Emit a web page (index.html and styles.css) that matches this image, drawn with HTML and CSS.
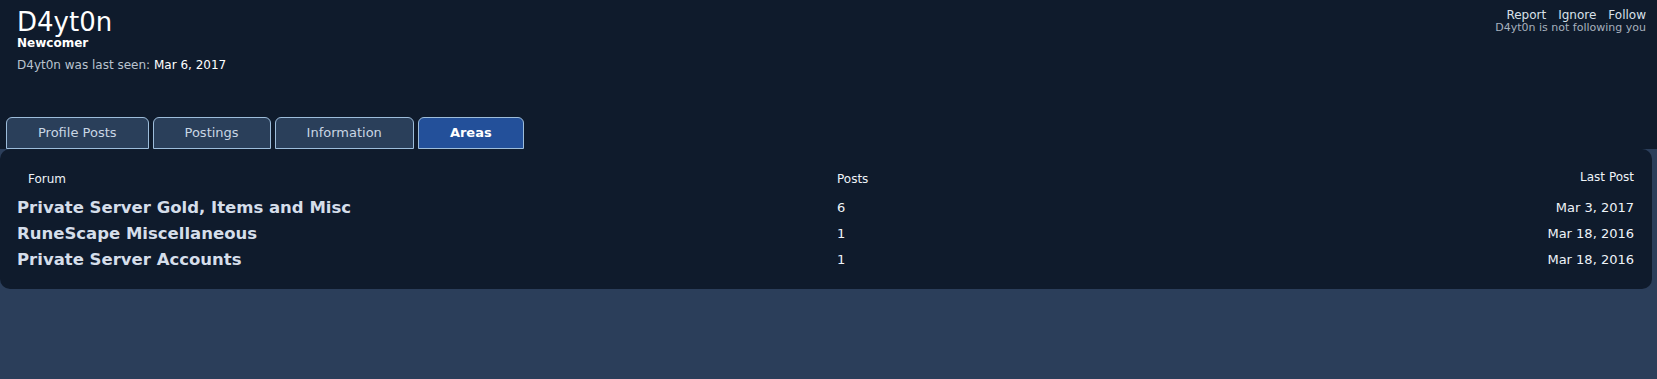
FILE: index.html
```html
<!DOCTYPE html>
<html lang="en">
<head>
<meta charset="utf-8">
<title>D4yt0n</title>
<link rel="stylesheet" href="styles.css">
</head>
<body>
<header class="profile-header">
  <div class="header-top">
    <div class="identity">
      <h1 class="username">D4yt0n</h1>
      <div class="rank">Newcomer</div>
      <div class="last-seen">D4yt0n was last seen: <span class="last-seen-date">Mar 6, 2017</span></div>
    </div>
    <div class="actions">
      <div class="action-links">
        <a class="action" href="#">Report</a>
        <a class="action" href="#">Ignore</a>
        <a class="action" href="#">Follow</a>
      </div>
      <div class="follow-status">D4yt0n is not following you</div>
    </div>
  </div>
  <nav class="tabs">
    <a class="tab" href="#">Profile Posts</a>
    <a class="tab" href="#">Postings</a>
    <a class="tab" href="#">Information</a>
    <a class="tab tab-active" href="#">Areas</a>
  </nav>
</header>
<section class="panel">
  <div class="areas-table">
    <div class="row head">
      <div class="cell forum head-forum">Forum</div>
      <div class="cell posts">Posts</div>
      <div class="cell last head-last">Last Post</div>
    </div>
    <div class="body-rows">
      <div class="row">
        <div class="cell forum"><a class="forum-link" href="#">Private Server Gold, Items and Misc</a></div>
        <div class="cell posts">6</div>
        <div class="cell last">Mar 3, 2017</div>
      </div>
      <div class="row">
        <div class="cell forum"><a class="forum-link" href="#">RuneScape Miscellaneous</a></div>
        <div class="cell posts">1</div>
        <div class="cell last">Mar 18, 2016</div>
      </div>
      <div class="row">
        <div class="cell forum"><a class="forum-link" href="#">Private Server Accounts</a></div>
        <div class="cell posts">1</div>
        <div class="cell last">Mar 18, 2016</div>
      </div>
    </div>
  </div>
</section>
</body>
</html>
```

FILE: styles.css
```css
html, body {
  margin: 0;
  padding: 0;
}
body {
  background: #2b3e5a;
  font-family: "DejaVu Sans", Verdana, sans-serif;
  color: #e6edf5;
  min-height: 379px;
}
a {
  text-decoration: none;
  color: inherit;
}
.profile-header {
  background: #0f1b2c;
  padding: 10px 11px 0 0;
}
.header-top {
  display: flex;
  justify-content: space-between;
  align-items: flex-start;
}
.identity {
  padding-left: 17px;
}
.username {
  margin: 0;
  font-weight: normal;
  font-size: 26px;
  line-height: 24px;
  color: #ffffff;
}
.rank {
  margin-top: 2px;
  font-size: 12px;
  font-weight: bold;
  line-height: 14px;
  color: #ffffff;
}
.last-seen {
  margin-top: 7px;
  font-size: 12px;
  line-height: 16px;
  color: #b9c3cf;
}
.last-seen-date {
  color: #ffffff;
}
.actions {
  margin-top: -2px;
  text-align: right;
}
.action-links {
  display: flex;
  justify-content: flex-end;
  gap: 12px;
  font-size: 12px;
  line-height: 14px;
}
.action {
  color: #d9e1ea;
}
.follow-status {
  font-size: 11px;
  line-height: 12px;
  color: #a7b1be;
}
.tabs {
  display: flex;
  gap: 4px;
  padding-left: 6px;
  margin-top: 44px;
}
.tab {
  display: block;
  height: 30px;
  line-height: 30px;
  padding: 0 31px;
  font-size: 13px;
  color: #c9d6e4;
  background: #2a3f5a;
  border: 1px solid #9dbddb;
  border-radius: 6px 6px 0 0;
}
.tab-wide {
  padding: 0 32px;
}
.tab-active {
  background: #23509a;
  color: #ffffff;
  font-weight: bold;
}
.panel {
  background: #0f1b2c;
  margin-right: 5px;
  border-radius: 10px;
  padding: 17px 18px 16px 17px;
}
.row {
  display: grid;
  grid-template-columns: 820px 1fr auto;
  line-height: 26px;
  height: 26px;
}
.body-rows {
  margin-top: 3px;
}
.cell {
  font-size: 13px;
  color: #eef3f8;
}
.head .cell {
  font-size: 12px;
}
.head-forum {
  padding-left: 11px;
}
.head-last {
  position: relative;
  top: -2px;
}
.forum-link {
  font-size: 16.5px;
  line-height: 26px;
  font-weight: bold;
  color: #d5deea;
}
.last {
  text-align: right;
}
```
